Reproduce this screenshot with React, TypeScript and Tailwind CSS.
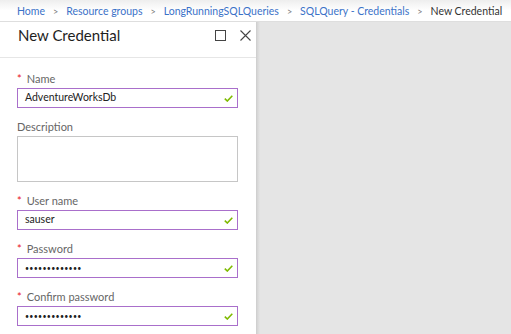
import React from "react";

const font = { fontFamily: '"Segoe UI", Lato, "Open Sans", sans-serif' };

function Check() {
  return (
    <svg width="9" height="7" viewBox="0 0 9 7" className="shrink-0">
      <path d="M0.8 3.6 L3.3 6 L8.3 0.8" fill="none" stroke="#7fba00" strokeWidth="1.6" />
    </svg>
  );
}

function Label({ text, required }: { text: string; required?: boolean }) {
  return (
    <div className="mb-1 flex h-4 items-end text-[11px] leading-none text-[#666]">
      {required && <span className="mr-[5px] text-[11px] text-[#e81123]">*</span>}
      <span>{text}</span>
    </div>
  );
}

function Field({ label, value, password }: { label: string; value: string; password?: boolean }) {
  return (
    <div className="mb-2">
      <Label text={label} required />
      <div className="flex h-5 w-[221px] items-center justify-between border border-[#a96fcb] pl-[7px] pr-[4px]">
        {password ? (
          <span className="text-[7px] leading-none tracking-[0.3px] text-[#222]">{value}</span>
        ) : (
          <span className="text-[10.5px] text-[#222]">{value}</span>
        )}
        <Check />
      </div>
    </div>
  );
}

export default function App() {
  const crumbs = ["Home", "Resource groups", "LongRunningSQLQueries", "SQLQuery - Credentials"];
  return (
    <div className="flex h-[334px] w-[511px] flex-col overflow-hidden bg-[#e5e5e5]" style={font}>
      <nav className="flex h-[22px] shrink-0 items-center whitespace-nowrap border-b border-[#dedede] bg-gradient-to-b from-[#eeeeee] via-white to-white pl-[17px] pt-[3px] text-[10.5px]">
        {crumbs.map((c) => (
          <span key={c} className="flex items-center">
            <span className="text-[#3b72c8]">{c}</span>
            <span className="mx-[8px] text-[9px] text-[#777]">&gt;</span>
          </span>
        ))}
        <span className="text-[#333]">New Credential</span>
      </nav>

      <div className="flex min-h-0 flex-1">
        <section className="w-[257px] shrink-0 border-r border-[#d0d0d0] bg-white">
          <header className="flex h-[36px] items-center justify-between border-b border-[#e6e6e6] pb-[9px] pl-[18px] pr-[5px]">
            <h1 className="text-[15px] text-[#1e1e1e]">New Credential</h1>
            <div className="flex items-center gap-[14px]">
              <svg width="11" height="11" viewBox="0 0 11 11">
                <rect x="0.5" y="0.5" width="10" height="10" fill="none" stroke="#444" strokeWidth="1" />
              </svg>
              <svg width="11" height="11" viewBox="0 0 11 11">
                <path d="M0.5 0.5 L10.5 10.5 M10.5 0.5 L0.5 10.5" stroke="#444" strokeWidth="1.1" />
              </svg>
            </div>
          </header>

          <div className="pl-[17px] pt-[10px]">
            <Field label="Name" value="AdventureWorksDb" />
            <div className="mb-2">
              <Label text="Description" />
              <div className="h-[46px] w-[221px] border border-[#c6c6c6]" />
            </div>
            <Field label="User name" value="sauser" />
            <Field label="Password" value="•••••••••••••" password />
            <Field label="Confirm password" value="•••••••••••••" password />
          </div>
        </section>
        <div className="w-[3px] bg-gradient-to-r from-[#d4d4d4] to-[#e5e5e5]" />
      </div>
    </div>
  );
}
